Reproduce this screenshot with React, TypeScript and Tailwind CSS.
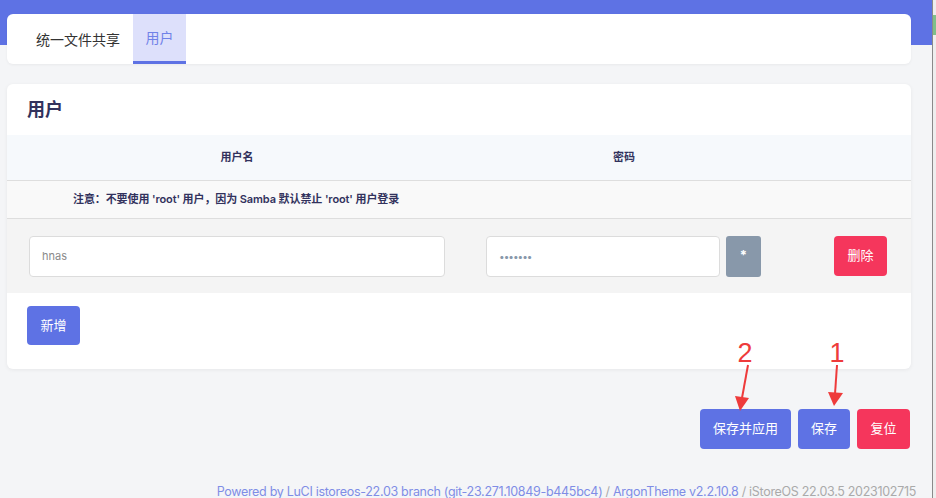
export default function App() {
  return (
    <div className="relative flex h-[498px] w-[936px] overflow-hidden bg-[#f4f5f7] font-['Inter','Noto_Sans_CJK_SC',sans-serif] text-[#32325d]">
      <main className="flex w-[932px] flex-col bg-[linear-gradient(#5e72e4_0,#5e72e4_45px,#f4f5f7_45px)] pl-[7px] pr-[21px] pt-[14px]">
        {/* tabs */}
        <div className="flex h-[50px] shrink-0 rounded-md bg-white shadow-[0_1px_3px_rgba(0,0,0,0.05)]">
          <div className="flex items-center pl-[29px] pr-[13px] text-[14px] text-[#333]">统一文件共享</div>
          <div className="flex w-[53px] items-center justify-center border-b-[3px] border-[#5e72e4] bg-[#dde0fb] text-[14px] text-[#7082e8]">用户</div>
        </div>

        {/* users card */}
        <section className="mt-[20px] flex h-[285px] shrink-0 flex-col overflow-hidden rounded-md bg-white shadow-[0_1px_4px_rgba(0,0,0,0.06)]">
          <h2 className="flex h-[51px] shrink-0 items-center pl-[20px] text-[18px] font-bold text-[#32325d]">用户</h2>
          <div className="flex h-[46px] shrink-0 items-center border-b border-[#dedede] bg-[#f6f9fc] text-[11px] font-semibold">
            <div className="w-[460px] text-center">用户名</div>
            <div className="w-[314px] text-center">密码</div>
          </div>
          <div className="flex h-[38px] shrink-0 items-center border-b border-[#dedede] bg-[#f9f9f9] pl-[66px] text-[11px] font-semibold tracking-[-0.1px]">
            注意：不要使用 'root' 用户，因为 Samba 默认禁止 'root' 用户登录
          </div>
          <div className="flex h-[74px] shrink-0 items-center bg-[#f4f4f4]">
            <div className="flex w-[460px] pl-[22px] pr-[22px]">
              <div className="flex h-[41px] flex-1 items-center rounded-[4px] border border-[#dcdcdc] bg-white pl-[12px] text-[11px] text-[#8a8a8a]">hnas</div>
            </div>
            <div className="flex w-[314px] gap-[6px] pl-[19px]">
              <div className="flex h-[41px] w-[234px] items-center rounded-[4px] border border-[#dcdcdc] bg-white pl-[12px] text-[10px] tracking-[-1px] text-[#8898aa]">•••••••</div>
              <div className="flex h-[41px] w-[35px] items-center justify-center rounded-[3px] bg-[#8898aa] text-[13px] font-bold text-white">*</div>
            </div>
            <div className="flex flex-1 justify-end pr-[24px]">
              <button className="h-[40px] w-[53px] rounded-[4px] bg-[#f5365c] text-[13px] text-white">删除</button>
            </div>
          </div>
          <div className="flex flex-1 pl-[20px] pt-[13px]">
            <button className="h-[39px] w-[53px] rounded-[4px] bg-[#5e72e4] text-[13px] text-white">新增</button>
          </div>
        </section>

        {/* actions */}
        <div className="mt-[40px] flex shrink-0 justify-end gap-[7px] pr-px">
          <button className="h-[40px] w-[91px] rounded-[4px] bg-[#5e72e4] text-[13px] text-white">保存并应用</button>
          <button className="h-[40px] w-[52px] rounded-[4px] bg-[#5e72e4] text-[13px] text-white">保存</button>
          <button className="h-[40px] w-[53px] rounded-[4px] bg-[#f5365c] text-[13px] text-white">复位</button>
        </div>

        {/* footer */}
        <footer className="mr-[-5px] mt-[34px] whitespace-nowrap text-right text-[12.5px] leading-[18px] tracking-[-0.3px] text-[#aaaaaa]">
          <span className="text-[#7f8de6]">Powered by LuCI istoreos-22.03 branch (git-23.271.10849-b445bc4)</span>
          {" / "}
          <span className="text-[#7f8de6]">ArgonTheme v2.2.10.8</span>
          {" / iStoreOS 22.03.5 2023102715"}
        </footer>
      </main>

      <div className="w-px bg-[#8a8a8a]" />
      <div className="flex flex-1 flex-col bg-[#eeeeee]">
        <div className="mt-[15px] h-[20px] bg-[#7fbf8a]" />
      </div>

      {/* annotations */}
      <svg className="pointer-events-none absolute left-0 top-0" width="936" height="498">
        <text x="745" y="362" fill="#ee3b3b" fontSize="27" textAnchor="middle" fontFamily="Liberation Sans, sans-serif">2</text>
        <line x1="748" y1="365" x2="742" y2="398" stroke="#ee3b3b" strokeWidth="2" />
        <polygon points="735,396 749,398 740,411" fill="#ee3b3b" />
        <text x="837" y="362" fill="#ee3b3b" fontSize="27" textAnchor="middle" fontFamily="Liberation Sans, sans-serif">1</text>
        <line x1="837" y1="365" x2="835" y2="394" stroke="#ee3b3b" strokeWidth="2" />
        <polygon points="828,392 843,393 834,406" fill="#ee3b3b" />
      </svg>
    </div>
  );
}
